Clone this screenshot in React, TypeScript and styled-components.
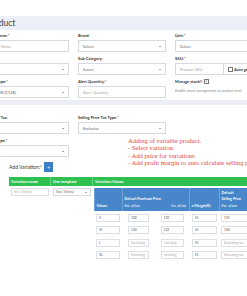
import React from 'react';
import styled, { createGlobalStyle } from 'styled-components';

const GlobalStyle = createGlobalStyle`
  html, body {
    margin: 0;
    padding: 0;
    background: #ffffff;
    overflow: hidden;
  }
  body {
    width: 247px;
    height: 296px;
    font-family: Lato, "Open Sans", sans-serif;
    color: #333;
  }
`;

const Page = styled.div`
  width: 320px;
  margin-left: -19px;
  padding-top: 16px;
`;

const BoxHeader = styled.div`
  height: 14px;
  background: #eceef8;
  display: flex;
  align-items: center;
`;

const Title = styled.h3`
  margin: 0 0 0 -30px;
  font-size: 8.5px;
  font-weight: 400;
  color: #444;
  white-space: nowrap;
`;

const Band = styled.div`
  height: 5px;
  margin-top: 2px;
  background: #eceef8;
`;

const FormGrid = styled.div<{ $top: number }>`
  display: grid;
  grid-template-columns: repeat(3, 88px);
  column-gap: 9px;
  row-gap: 4px;
  padding-top: ${(p) => p.$top}px;
`;

const Field = styled.div`
  display: flex;
  flex-direction: column;
  min-width: 0;
`;

const Label = styled.label`
  height: 5px;
  line-height: 5px;
  margin-bottom: 2px;
  font-size: 4px;
  font-weight: 700;
  white-space: nowrap;
  display: flex;
  align-items: center;
  gap: 1px;
`;

const TextInput = styled.input`
  height: 12px;
  width: 100%;
  box-sizing: border-box;
  margin: 0;
  padding: 0 4px;
  border: 1px solid #d6d9e0;
  border-radius: 0;
  font-family: inherit;
  font-size: 4px;
  color: #555;
  outline: none;

  &::placeholder {
    color: #a8a8a8;
  }
`;

const SelectBox = styled.div`
  position: relative;
  height: 12px;
  box-sizing: border-box;
  padding: 0 4px;
  border: 1px solid #d6d9e0;
  font-size: 4px;
  color: #666;
  display: flex;
  align-items: center;
  white-space: nowrap;

  &::after {
    content: '';
    position: absolute;
    right: 4px;
    top: 5px;
    border-left: 1.2px solid transparent;
    border-right: 1.2px solid transparent;
    border-top: 1.6px solid #555;
  }
`;

const InputGroup = styled.div`
  display: flex;
  height: 12px;
`;

const Addon = styled.div`
  flex: 1;
  display: flex;
  align-items: center;
  gap: 1px;
  padding-left: 4px;
  border: 1px solid #d6d9e0;
  border-left: none;
  font-size: 4px;
  font-weight: 700;
  white-space: nowrap;
`;

const Check = styled.span`
  display: inline-block;
  width: 3px;
  height: 3px;
  border: 0.6px solid #777;
  background: #fff;
  font-size: 3px;
  line-height: 3px;
  text-align: center;
`;

const Help = styled.p`
  margin: 2px 0 0;
  font-size: 3.8px;
  font-style: italic;
  color: #888;
  white-space: nowrap;
`;

const Note = styled.div`
  grid-column: 2 / span 2;
  height: 19px;
  padding-left: 50px;
  margin-top: -1px;
  font-family: "Liberation Serif", "Times New Roman", serif;
  font-size: 6.6px;
  line-height: 7.3px;
  color: #e0463c;
  white-space: nowrap;
`;

const Variations = styled.div`
  padding-left: 28px;
  margin-top: 5px;
`;

const AddRow = styled.div`
  display: flex;
  align-items: center;
  gap: 2px;
  height: 10px;
  font-size: 5px;
  color: #333;
`;

const PlusButton = styled.button`
  width: 9px;
  height: 10px;
  padding: 0;
  border: none;
  background: #3c7fc4;
  color: #fff;
  font-size: 5px;
  line-height: 10px;
`;

const VarTable = styled.div`
  margin-top: 5px;
  display: grid;
  grid-template-columns: 42px 42px 1fr;
`;

const GreenHead = styled.div`
  height: 9px;
  background: #2fc14f;
  color: #fff;
  font-size: 4px;
  font-weight: 700;
  display: flex;
  align-items: center;
  padding-left: 2px;
  border-right: 1px solid #5fd67a;
  white-space: nowrap;
`;

const Cell = styled.div`
  padding: 2px 2px 0;
`;

const SmallInput = styled.input<{ $w?: number }>`
  display: block;
  width: ${(p) => (p.$w ? `${p.$w}px` : '100%')};
  height: 8px;
  box-sizing: border-box;
  margin: 0 auto;
  padding: 0 2px;
  border: 1px solid #dcdfe5;
  font-family: inherit;
  font-size: 3.3px;
  color: #555;
  outline: none;

  &::placeholder {
    color: #aaa;
  }
`;

const SmallSelect = styled(SelectBox)`
  height: 8px;
  font-size: 3.3px;
  padding: 0 2px;

  &::after {
    top: 3px;
    right: 3px;
  }
`;

const ValuesTable = styled.div`
  margin: 2px 0 0 1px;
  display: grid;
  grid-template-columns: 28px 33px 34px 30px 50px;
  grid-template-rows: 23px;
  grid-auto-rows: 12.3px;
`;

const BlueHead = styled.div<{ $span?: number }>`
  grid-row: 1;
  grid-column: span ${(p) => p.$span || 1};
  box-sizing: border-box;
  background: #4787c9;
  color: #fff;
  font-size: 3.6px;
  line-height: 6.5px;
  padding: 0 1px 2px 1.5px;
  display: flex;
  flex-direction: column;
  justify-content: flex-end;
  border-left: 1px solid #6ea3d8;
  white-space: nowrap;
`;

const HeadTitle = styled.b`
  font-weight: 700;
`;

const HeadSub = styled.div`
  display: flex;
  justify-content: space-between;
  font-style: italic;
  padding-right: 2px;
`;

const ValueCell = styled.div`
  display: flex;
  align-items: center;
  padding-top: 2px;
`;

const rows = [
  { value: 'S', exc: '100', inc: '110', margin: '25', sell: '125' },
  { value: 'M', exc: '120', inc: '132', margin: '25', sell: '150' },
  { value: 'L', exc: '', inc: '', margin: '25', sell: '' },
  { value: 'XL', exc: '', inc: '', margin: '25', sell: '' },
];

const App = () => {
  return (
    <>
      <GlobalStyle />
      <Page>
        <BoxHeader>
          <Title>Add new product</Title>
        </BoxHeader>

        <FormGrid $top={3}>
          <Field>
            <Label>Product Name:*</Label>
            <TextInput placeholder="Product Name" readOnly />
          </Field>
          <Field>
            <Label>Brand:</Label>
            <SelectBox>Select</SelectBox>
          </Field>
          <Field>
            <Label>Unit:*</Label>
            <SelectBox>Select</SelectBox>
          </Field>

          <Field>
            <Label>Category:</Label>
            <SelectBox>Select</SelectBox>
          </Field>
          <Field>
            <Label>Sub Category:</Label>
            <SelectBox>Select</SelectBox>
          </Field>
          <Field>
            <Label>SKU:*</Label>
            <InputGroup>
              <TextInput placeholder="Product SKU" readOnly style={{ width: 49 }} />
              <Addon>
                <Check /> Auto generate
              </Addon>
            </InputGroup>
          </Field>

          <Field>
            <Label>Barcode Type:*</Label>
            <SelectBox>Code 128 (C128)</SelectBox>
          </Field>
          <Field>
            <Label>Alert Quantity:*</Label>
            <TextInput placeholder="Alert Quantity" readOnly />
          </Field>
          <Field>
            <Label>
              Manage stock?: <Check>✓</Check>
            </Label>
            <Help>Enable stock management at product level</Help>
          </Field>
        </FormGrid>

        <Band />

        <FormGrid $top={10}>
          <Field>
            <Label>Applicable Tax:</Label>
            <SelectBox>None</SelectBox>
          </Field>
          <Field>
            <Label>Selling Price Tax Type:*</Label>
            <SelectBox>Exclusive</SelectBox>
          </Field>
          <div />

          <Field>
            <Label>Product Type:*</Label>
            <SelectBox>Variable</SelectBox>
          </Field>
          <Note>
            Adding of variable product.
            <br />- Select variation
            <br />- Add price for variations
            <br />- Add profit margin to auto calculate selling price
          </Note>
        </FormGrid>

        <Variations>
          <AddRow>
            Add Variation:*
            <PlusButton>+</PlusButton>
          </AddRow>

          <VarTable>
            <GreenHead>Variation name</GreenHead>
            <GreenHead>Use template</GreenHead>
            <GreenHead>Variation Values</GreenHead>

            <Cell>
              <SmallInput placeholder="Size (Tshirts)" readOnly />
            </Cell>
            <Cell>
              <SmallSelect>Size (Tshirts)</SmallSelect>
            </Cell>
            <div>
              <ValuesTable>
                <BlueHead>
                  <HeadTitle>Values</HeadTitle>
                </BlueHead>
                <BlueHead $span={2}>
                  <HeadTitle>Default Purchase Price</HeadTitle>
                  <HeadSub>
                    <span>Exc. of tax</span>
                    <span>Inc. of tax</span>
                  </HeadSub>
                </BlueHead>
                <BlueHead>
                  <HeadTitle>x Margin(%)</HeadTitle>
                </BlueHead>
                <BlueHead>
                  <HeadTitle>Default</HeadTitle>
                  <HeadTitle>Selling Price</HeadTitle>
                  <HeadSub>
                    <span>Exc. of tax</span>
                  </HeadSub>
                </BlueHead>

                {rows.map((r) => (
                  <React.Fragment key={r.value}>
                    <ValueCell>
                      <SmallInput $w={24} defaultValue={r.value} readOnly />
                    </ValueCell>
                    <ValueCell>
                      <SmallInput $w={21} defaultValue={r.exc} placeholder="Excluding" readOnly />
                    </ValueCell>
                    <ValueCell>
                      <SmallInput $w={23} defaultValue={r.inc} placeholder="Including" readOnly />
                    </ValueCell>
                    <ValueCell>
                      <SmallInput $w={25} defaultValue={r.margin} readOnly />
                    </ValueCell>
                    <ValueCell>
                      <SmallInput $w={46} defaultValue={r.sell} placeholder="Excluding tax" readOnly />
                    </ValueCell>
                  </React.Fragment>
                ))}
              </ValuesTable>
            </div>
          </VarTable>
        </Variations>
      </Page>
    </>
  );
};

export default App;
